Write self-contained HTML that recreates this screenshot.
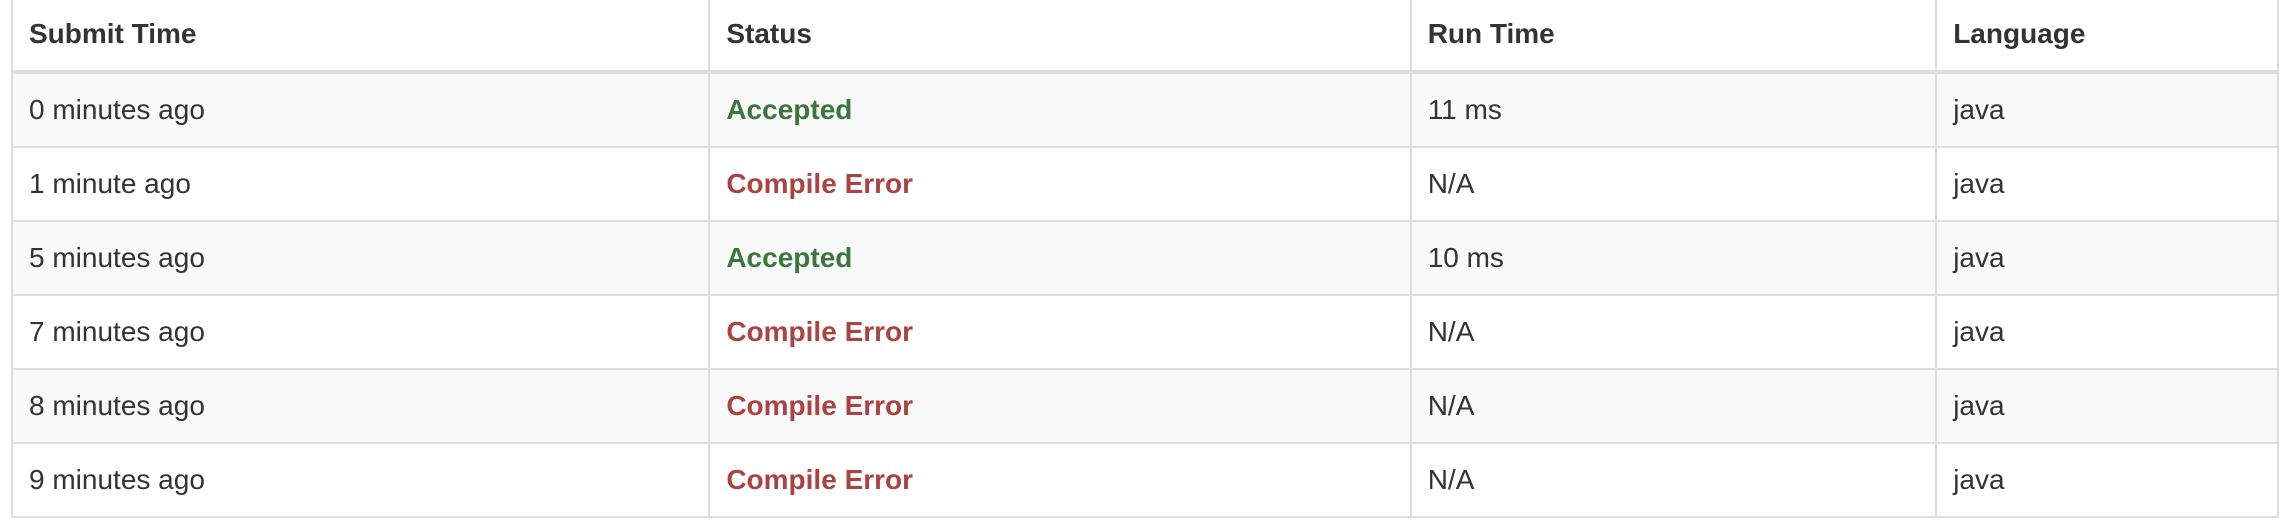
<!DOCTYPE html>
<html><head><style>
html,body{margin:0;padding:0;background:#fff;width:2292px;height:524px;overflow:hidden}
table{position:absolute;left:11px;top:-4px;width:2268px;border-collapse:collapse;font-family:"Liberation Sans",Arial,sans-serif;font-size:28px;color:#333}
td,th{border:2px solid #ddd;padding:16px;line-height:40px;text-align:left;vertical-align:top}
th{border-bottom:4px solid #ddd;font-weight:bold}
tbody tr:nth-child(odd){background:#f9f9f9}
.a{color:#3c763d;font-weight:bold}
.e{color:#a94442;font-weight:bold}
</style></head><body>
<table>
<colgroup><col style="width:698px"><col style="width:702px"><col style="width:526px"><col style="width:342px"></colgroup>
<thead><tr><th>Submit Time</th><th>Status</th><th>Run Time</th><th>Language</th></tr></thead>
<tbody>
<tr><td>0 minutes ago</td><td class="a">Accepted</td><td>11 ms</td><td>java</td></tr>
<tr><td>1 minute ago</td><td class="e">Compile Error</td><td>N/A</td><td>java</td></tr>
<tr><td>5 minutes ago</td><td class="a">Accepted</td><td>10 ms</td><td>java</td></tr>
<tr><td>7 minutes ago</td><td class="e">Compile Error</td><td>N/A</td><td>java</td></tr>
<tr><td>8 minutes ago</td><td class="e">Compile Error</td><td>N/A</td><td>java</td></tr>
<tr><td>9 minutes ago</td><td class="e">Compile Error</td><td>N/A</td><td>java</td></tr>
</tbody></table>
</body></html>
